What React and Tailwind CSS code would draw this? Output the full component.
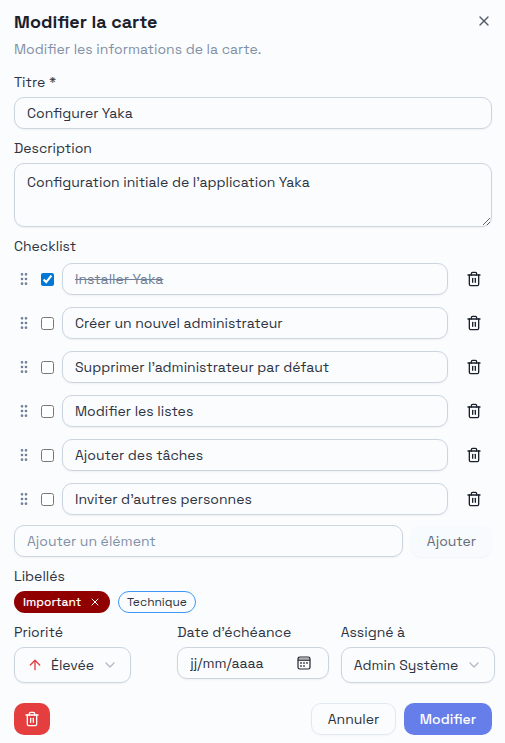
import { useState } from "react";
import { ArrowUp, ChevronDown, GripVertical, Trash2, X } from "lucide-react";

const field =
  "w-full min-w-0 rounded-[10px] border border-[#cbd5e0] bg-[#fbfcfe] px-3 text-sm text-[#2d3340] shadow-[0_1px_2px_rgba(0,0,0,0.05)] outline-none placeholder:text-[#8290a5]";
const label = "block text-sm leading-[14px] text-[#2d3340]";

const initialItems = [
  { id: 1, text: "Installer Yaka", done: true },
  { id: 2, text: "Créer un nouvel administrateur", done: false },
  { id: 3, text: "Supprimer l’administrateur par défaut", done: false },
  { id: 4, text: "Modifier les listes", done: false },
  { id: 5, text: "Ajouter des tâches", done: false },
  { id: 6, text: "Inviter d’autres personnes", done: false },
];

function CalendarIcon() {
  return (
    <svg width="14" height="14" viewBox="0 0 14 14" fill="none" aria-hidden="true">
      <rect x="1" y="1" width="12" height="12" rx="1.8" stroke="#20242e" strokeWidth="1.2" />
      <path d="M1 4.2H13" stroke="#20242e" strokeWidth="1.2" />
      <path d="M1.5 2.6H12.5" stroke="#20242e" strokeOpacity="0.35" strokeWidth="1.6" />
      <path
        d="M6.2 6.2h1.6v1.6H6.2zM9.2 6.2h1.6v1.6H9.2zM3.2 6.2h1.6v1.6H3.2zM3.2 9.2h1.6v1.6H3.2zM6.2 9.2h1.6v1.6H6.2z"
        fill="#20242e"
      />
    </svg>
  );
}

function ChecklistRow({ item, onToggle, onText, onRemove }) {
  return (
    <li className="flex h-9 items-center gap-2">
      <button type="button" aria-label="Déplacer" className="w-[19px] shrink-0 cursor-grab pl-0.5 text-[#718096]">
        <GripVertical size={16} />
      </button>
      <input
        type="checkbox"
        aria-label={item.text}
        checked={item.done}
        onChange={onToggle}
        className="size-[13px] shrink-0 accent-[#0078d7]"
      />
      <input
        type="text"
        aria-label="Élément"
        value={item.text}
        onChange={onText}
        className={item.done ? `${field} h-8 text-[#718096]! line-through` : `${field} h-8`}
      />
      <button
        type="button"
        aria-label="Supprimer l’élément"
        onClick={onRemove}
        className="flex size-9 shrink-0 items-center justify-center text-[#1a202c]"
      >
        <Trash2 size={16} />
      </button>
    </li>
  );
}

export default function App() {
  const [items, setItems] = useState(initialItems);
  const [title, setTitle] = useState("Configurer Yaka");
  const [description, setDescription] = useState("Configuration initiale de l’application Yaka");

  const update = (id, change) =>
    setItems(items.map((item) => (item.id === id ? { ...item, ...change } : item)));

  return (
    <main className="min-h-screen bg-[#fbfcfe] pt-[13px] pr-[13px] pb-2 pl-[14px] font-['Space_Grotesk','Inter',sans-serif] text-[#2d3340]">
      <header className="mb-4 flex items-start justify-between">
        <div>
          <h1 className="text-lg leading-[18px] font-semibold text-[#1a202c]">Modifier la carte</h1>
          <p className="mt-2 text-sm text-[#8290a5]">Modifier les informations de la carte.</p>
        </div>
        <button type="button" aria-label="Fermer" className="text-[#555b68]">
          <X size={16} />
        </button>
      </header>

      <form className="flex flex-col gap-3" onSubmit={(e) => e.preventDefault()}>
        <div className="flex flex-col gap-2">
          <label htmlFor="title" className={label}>Titre *</label>
          <input id="title" type="text" value={title} onChange={(e) => setTitle(e.target.value)} className={`${field} h-8`} />
        </div>

        <div className="flex flex-col gap-2">
          <label htmlFor="description" className={label}>Description</label>
          <textarea
            id="description"
            value={description}
            onChange={(e) => setDescription(e.target.value)}
            className={`${field} block h-16 resize-y py-2`}
          />
        </div>

        <section className="flex flex-col gap-2">
          <h2 className={label}>Checklist</h2>
          <ul className="flex flex-col gap-2">
            {items.map((item) => (
              <ChecklistRow
                key={item.id}
                item={item}
                onToggle={() => update(item.id, { done: !item.done })}
                onText={(e) => update(item.id, { text: e.target.value })}
                onRemove={() => setItems(items.filter((other) => other.id !== item.id))}
              />
            ))}
          </ul>
          <div className="flex gap-2">
            <input type="text" aria-label="Ajouter un élément" placeholder="Ajouter un élément" className={`${field} h-8`} />
            <button
              type="button"
              disabled
              className="h-8 w-[81px] shrink-0 rounded-[10px] bg-[#f7fbfd] text-sm text-[#666c78] shadow-[0_1px_2px_rgba(0,0,0,0.04)]"
            >
              Ajouter
            </button>
          </div>
        </section>

        <section className="flex flex-col gap-2">
          <h2 className={label}>Libellés</h2>
          <div className="flex gap-2">
            <button
              type="button"
              className="flex h-[22px] w-24 items-center justify-between rounded-full bg-[#900000] px-[9px] text-xs font-medium text-white"
            >
              Important
              <X size={12} />
            </button>
            <button
              type="button"
              className="h-[22px] w-[78px] rounded-full border border-[#3d98f5] text-xs text-[#2d3340]"
            >
              Technique
            </button>
          </div>
        </section>

        <div className="grid grid-cols-3 gap-3">
          <div className="flex min-w-0 flex-col gap-2">
            <label htmlFor="priority" className={label}>Priorité</label>
            <div className="relative w-[117px]">
              <ArrowUp size={16} className="pointer-events-none absolute top-[10px] left-[13px] text-[#e53e3e]" />
              <select id="priority" defaultValue="high" className={`${field} block h-9 appearance-none pl-9!`}>
                <option value="low">Faible</option>
                <option value="medium">Moyenne</option>
                <option value="high">Élevée</option>
              </select>
              <ChevronDown size={16} className="pointer-events-none absolute top-[10px] right-[13px] text-[#b4bac6]" />
            </div>
          </div>

          <div className="flex min-w-0 flex-col gap-2">
            <label htmlFor="due" className={label}>Date d’échéance</label>
            <div className="relative">
              <input
                id="due"
                type="text"
                placeholder="jj/mm/aaaa"
                className={`${field} block h-8 placeholder:text-[#2d3340]!`}
              />
              <button type="button" aria-label="Ouvrir le calendrier" className="absolute top-[9px] right-[18px]">
                <CalendarIcon />
              </button>
            </div>
          </div>

          <div className="flex min-w-0 flex-col gap-2">
            <label htmlFor="assignee" className={label}>Assigné à</label>
            <div className="relative w-[154px]">
              <select id="assignee" defaultValue="admin" className={`${field} block h-9 appearance-none`}>
                <option value="none">Personne</option>
                <option value="admin">Admin Système</option>
              </select>
              <ChevronDown size={16} className="pointer-events-none absolute top-[10px] right-[13px] text-[#b4bac6]" />
            </div>
          </div>
        </div>

        <footer className="mt-2 flex items-center justify-between">
          <button
            type="button"
            aria-label="Supprimer la carte"
            className="flex h-8 w-9 items-center justify-center rounded-[10px] bg-[#e53e3e] text-white"
          >
            <Trash2 size={16} />
          </button>
          <div className="flex gap-2">
            <button
              type="button"
              className="h-8 w-[85px] rounded-[10px] border border-[#e2e8f0] text-sm text-[#2d3340] shadow-[0_1px_2px_rgba(0,0,0,0.03)]"
            >
              Annuler
            </button>
            <button type="submit" className="h-8 w-[88px] rounded-[10px] bg-[#667eea] text-sm font-medium text-white">
              Modifier
            </button>
          </div>
        </footer>
      </form>
    </main>
  );
}
